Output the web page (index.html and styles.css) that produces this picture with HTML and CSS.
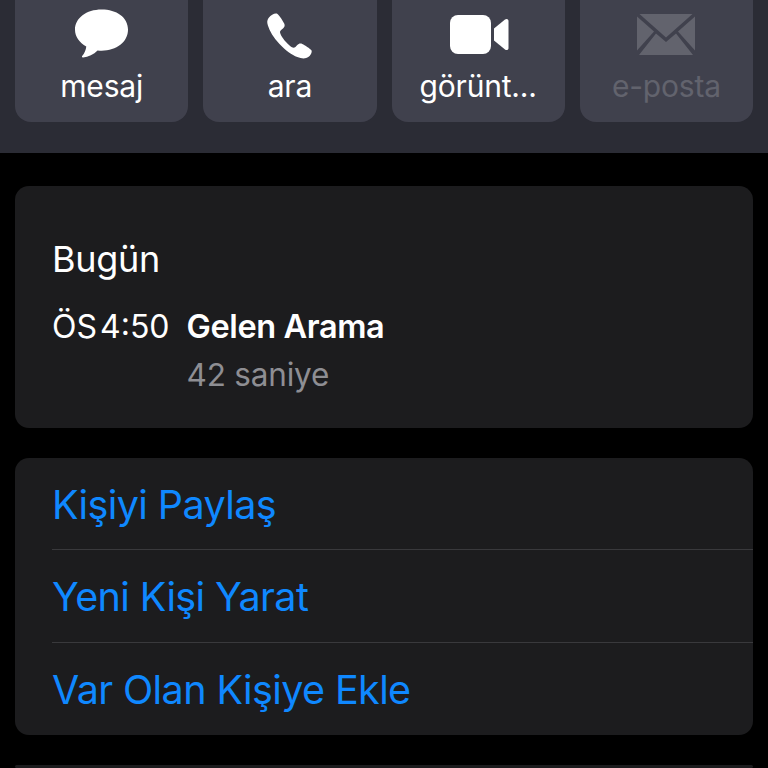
FILE: index.html
```html
<!DOCTYPE html>
<html lang="tr">
<head>
	<meta charset="utf-8">
	<title>Kişi</title>
	<link rel="stylesheet" href="styles.css">
</head>
<body>

	<div class="top">
		<div class="action">
			<svg class="icon" width="55" height="50" viewBox="0 0 56 50">
				<path fill="#fff" d="M28 0C12.6 0 1 8.800 1 20.500c0 7.300 4.500 13.500 11.500 17.200-.3 3.200-1.900 7-4.200 9.800-.6.800 0 1.700 1 1.500 5.200-.7 10.800-3.400 14.700-7.300 1.500.2 2.900.3 4 .3 15.400 0 27-8.800 27-21.500S43.400 0 28 0z"/>
			</svg>
			<span class="label">mesaj</span>
		</div>
		<div class="action">
			<svg class="icon" width="46" height="46" viewBox="0 0 46 46">
				<path fill="#fff" d="M2 4.500C4 1.800 8.500-.5 10.500 1c1.800 1.300 5.500 7 6.700 9.500 1 2 .2 3.700-1.200 5-1.300 1.200-3 2-3 3.500 0 2 2.500 6 5.500 9.500 3.300 3.700 6.300 6.200 8 6.200 1.500 0 2.500-1.500 3.800-2.800 1.300-1.300 3-2 5-1 2.500 1.200 7.700 4.500 9 6.200 1.300 1.900-.7 5.400-3 7-2.400 1.700-6.500 1.800-11 0C25 42 18.500 37.500 12.500 31 6.500 24.500 2.500 18 .9 12.500-.3 9 .2 6.900 2 4.500z"/>
			</svg>
			<span class="label">ara</span>
		</div>
		<div class="action">
			<svg class="icon video" width="59" height="40" viewBox="0 0 59 40">
				<rect fill="#fff" x="0" y="0" width="41" height="39" rx="8"/>
				<path fill="#fff" d="M44 13.500 55 4.500c1.500-1.200 3.500-.6 3.500 1.500v27c0 2.100-2 2.700-3.500 1.500L44 25.500z"/>
			</svg>
			<span class="label">görünt...</span>
		</div>
		<div class="action off">
			<svg class="icon mail" width="58" height="42" viewBox="0 0 58 42">
				<path fill="#62636d" d="M2.500 0h53L29 23.500z"/>
				<path fill="#62636d" d="M0 2.500 17 17.500 0 36.500z"/>
				<path fill="#62636d" d="M58 2.500 41 17.500 58 36.500z"/>
				<path fill="#62636d" d="M19 19.500l10 8.500 10-8.500L56 41H2z"/>
			</svg>
			<span class="label">e-posta</span>
		</div>
	</div>

	<div class="card today">
		<h2>Bugün</h2>
		<div class="call">
			<span class="time">ÖS 4:50</span>
			<div>
				<div class="title">Gelen Arama</div>
				<div class="length">42 saniye</div>
			</div>
		</div>
	</div>

	<div class="card links">
		<div class="link">Kişiyi Paylaş</div>
		<div class="link">Yeni Kişi Yarat</div>
		<div class="link">Var Olan Kişiye Ekle</div>
	</div>

	<div class="card more"></div>

</body>
</html>
```

FILE: styles.css
```css
body {
	margin: 0;
	height: 768px;
	overflow: hidden;
	background: #000;
	color: #fff;
	font-family: Inter, "Liberation Sans", sans-serif;
}

.top {
	display: flex;
	align-items: flex-end;
	gap: 15px;
	height: 122px;
	padding: 0 15px 31px;
	overflow: hidden;
	background: #2b2c35;
}

.action {
	flex: 1;
	flex-shrink: 0;
	height: 150px;
	box-sizing: border-box;
	padding-bottom: 18px;
	display: flex;
	flex-direction: column;
	align-items: center;
	justify-content: flex-end;
	background: #40414d;
	border-radius: 16px;
}

.icon {
	display: block;
	margin-bottom: 9px;
}

.video {
	margin-bottom: 13px;
	margin-left: 3px;
}

.mail {
	margin-bottom: 12px;
}

.label {
	font-size: 30px;
	line-height: 36px;
	letter-spacing: -0.2px;
}

.off .label {
	color: #62636d;
}

.card {
	margin: 33px 15px 0;
	background: #1c1c1e;
	border-radius: 14px;
}

.today {
	height: 242px;
	box-sizing: border-box;
	padding: 50px 37px 0;
}

h2 {
	margin: 0;
	font-size: 36px;
	line-height: 46px;
	font-weight: 400;
	letter-spacing: -0.3px;
}

.call {
	display: flex;
	gap: 17px;
	margin-top: 22px;
	font-size: 32px;
	line-height: 46px;
}

.time {
	word-spacing: -6px;
}

.title {
	font-size: 32.5px;
	font-weight: 600;
	letter-spacing: -0.4px;
}

.length {
	margin-top: 2px;
	color: #8e8e93;
	font-size: 31.500px;
	letter-spacing: -0.2px;
}

.links {
	margin-top: 30px;
	padding-left: 37px;
}

.link {
	height: 92px;
	line-height: 94px;
	font-size: 39.500px;
	letter-spacing: -0.6px;
	color: #0f88ff;
	border-bottom: 1px solid #39393c;
}

.link:first-child {
	height: 91px;
}

.link:last-child {
	border-bottom: 0;
}

.more {
	margin-top: 30px;
	height: 3px;
}
```
